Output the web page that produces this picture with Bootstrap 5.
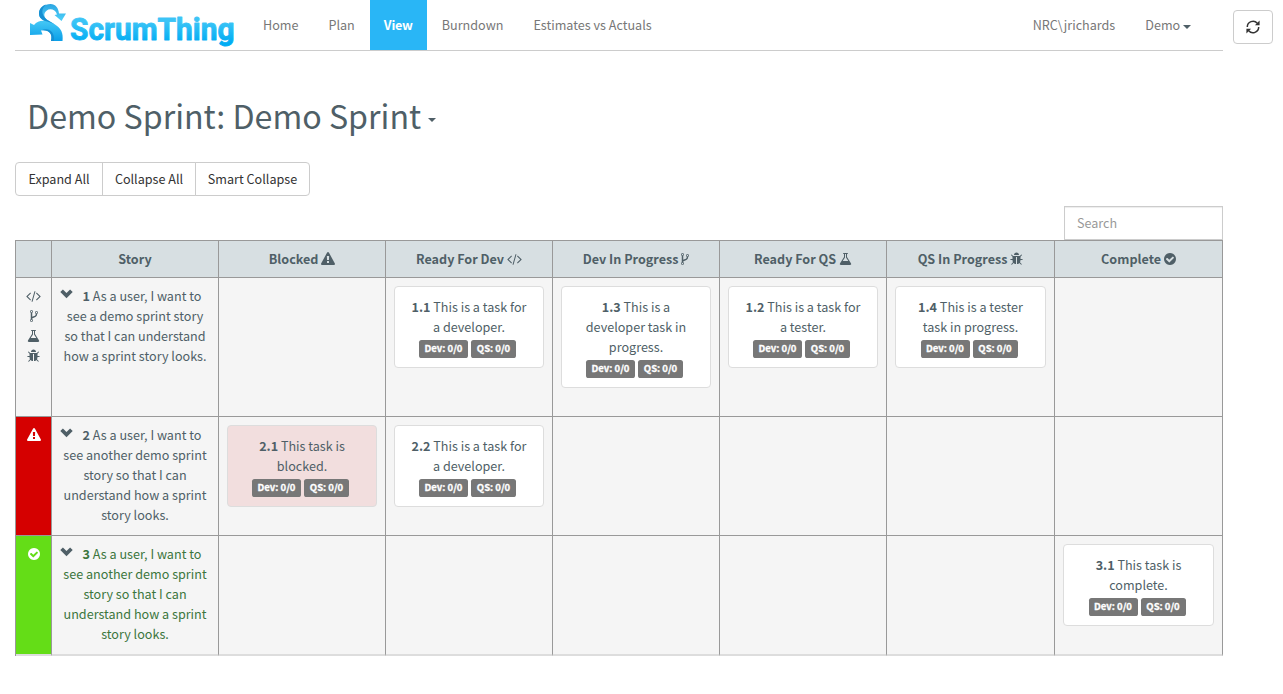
<!DOCTYPE html>
<html lang="en">
<head>
<meta charset="utf-8">
<title>ScrumThing</title>
<meta name="viewport" content="width=device-width, initial-scale=1">
<link href="https://cdn.jsdelivr.net/npm/bootstrap@5.3.0/dist/css/bootstrap.min.css" rel="stylesheet">
<style>
  body { font-family: "Noto Sans CJK SC", "Source Sans Pro", sans-serif; font-size: 12.6px; line-height: 20px; color: #4f5f67; background: #fff; overflow-x: hidden; }
  .page-main { width: 1208px; margin-left: 15px; }
  .topbar { height: 51px; border-bottom: 1px solid #ccc; padding: 0; }
  .topbar .navbar-nav .nav-link { padding: 15px; height: 50px; color: #777; line-height: 20px; white-space: nowrap; }
  .topbar .navbar-nav .nav-link.active { background: #29b6f6; color: #fff; font-weight: 700; width: 57px; padding: 15px 0; text-align: center; letter-spacing: -.2px; }
  .brand-logo { width: 218px; height: 50px; margin-right: 15px; }
  .brand-logo svg { overflow: visible; }
  .drop-caret { display: inline-block; border: 4px solid transparent; border-top-color: currentColor; border-bottom: 0; vertical-align: middle; color: #4f5f67; }
  .refresh-btn { width: 40px; height: 34px; margin: 10px 10px 0 0; padding: 0; }
  .btn-plain { --bs-btn-color: #333; --bs-btn-border-color: #ccc; --bs-btn-bg: #fff; --bs-btn-hover-bg: #e6e6e6; --bs-btn-hover-border-color: #adadad; --bs-btn-border-radius: 4px; --bs-btn-font-size: 12.6px; --bs-btn-line-height: 20px; --bs-btn-padding-y: 6px; --bs-btn-padding-x: 0; }
  .w-expand { width: 88px; } .w-collapse { width: 94px; } .w-smart { width: 115px; }
  .sprint-title { font-size: 32.2px; font-weight: 400; line-height: 40px; margin: 44px 0 27px 12px; white-space: nowrap; }
  .sprint-title .drop-caret { margin-left: 7px; }
  .filter-row { margin-top: 10px; }
  .search-box { width: 159px; height: 34px; border: 1px solid #ccc; border-radius: 0; font-size: 12.6px; line-height: 20px; padding: 5px 12px 7px; box-shadow: inset 0 1px 1px rgba(0,0,0,.075); }
  .search-box::placeholder { color: #999; }
  .board { table-layout: fixed; width: 1208px; border-collapse: separate; border-spacing: 0; border: solid #999; border-width: 1px 0 0 1px; text-align: center; }
  .board th, .board td { border: solid #999; border-width: 0 1px 1px 0; padding: 8px; vertical-align: top; background: #f5f5f5; }
  .board th { background: #d7dfe2; height: 37px; white-space: nowrap; }
  .board tr:last-child td { border-bottom: 2px solid #ddd; }
  .c-state { width: 36px; } .c-col { width: 167px; } .c-wide { width: 168px; }
  .board td.state { padding: 8px 0; }
  .board td.state-blocked { background: #d50000; color: #fff; }
  .board td.state-done { background: #64dd17; color: #fff; }
  .board td.done-text { color: #3c763d; }
  .toggler { float: left; width: 14px; height: 14px; margin-top: 3px; color: #4f5f67; line-height: 0; text-align: left; }
  .task { background: #fff; border: 1px solid #ddd; border-radius: 4px; padding: 10px 15px; margin-bottom: 20px; }
  .task-blocked { background: #f2dede; }
  .hours { display: flex; justify-content: center; height: 20px; padding-top: 3px; }
  .hours span { height: 18px; margin-right: 3px; border-radius: 2.6px; background: #777; color: #fff; font-size: 9.5px; font-weight: 700; line-height: 17px; width: 49px; flex: none; -webkit-text-stroke: .3px #fff; }
  .hours span + span { width: 45px; }
  .ico { height: 14px; vertical-align: -2px; fill: currentColor; }
</style>
</head>
<body>
<svg width="0" height="0" class="position-absolute" aria-hidden="true">
  <symbol id="code" viewBox="0 0 1920 1792"><path d="M617 1399l-50 50q-10 10-23 10t-23-10l-466-466q-10-10-10-23t10-23l466-466q10-10 23-10t23 10l50 50q10 10 10 23t-10 23l-393 393 393 393q10 10 10 23t-10 23zm591-1067l-373 1291q-4 13-15.5 19.5t-23.5 2.5l-62-17q-13-4-19.5-15.5t-2.5-24.5l373-1291q4-13 15.5-19.5t23.5-2.5l62 17q13 4 19.5 15.5t2.5 24.5zm657 651l-466 466q-10 10-23 10t-23-10l-50-50q-10-10-10-23t10-23l393-393-393-393q-10-10-10-23t10-23l50-50q10-10 23-10t23 10l466 466q10 10 10 23t-10 23z"/></symbol>
  <symbol id="fork" viewBox="384 0 1024 1792"><path d="M672 1472q0-40-28-68t-68-28-68 28-28 68 28 68 68 28 68-28 28-68zm0-1152q0-40-28-68t-68-28-68 28-28 68 28 68 68 28 68-28 28-68zm640 128q0-40-28-68t-68-28-68 28-28 68 28 68 68 28 68-28 28-68zm96 0q0 52-26 96.5t-70 69.5q-2 287-226 414-67 38-203 81-128 40-169.500 71t-41.500 100v26q44 25 70 69.500t26 96.500q0 80-56 136t-136 56-136-56-56-136q0-52 26-96.500t70-69.500v-820q-44-25-70-69.500t-26-96.500q0-80 56-136t136-56 136 56 56 136q0 52-26 96.500t-70 69.500v497q54-26 154-57 55-17 87.500-29.500t70.500-31 59-39.500 40.500-51 28-69.500 8.500-91.500q-44-25-70-69.500t-26-96.500q0-80 56-136t136-56 136 56 56 136z"/></symbol>
  <symbol id="flask" viewBox="64 0 1664 1792"><path d="M1591 1448q56 89 21.500 152.500t-140.500 63.500h-1152q-106 0-140.500-63.500t21.500-152.500l503-793v-399h-64q-26 0-45-19t-19-45 19-45 45-19h512q26 0 45 19t19 45-19 45-45 19h-64v399zm-779-725l-272 429h712l-272-429-20-31v-436h-128v436z"/></symbol>
  <symbol id="bug" viewBox="64 0 1664 1792"><path d="M1696 960q0 26-19 45t-45 19h-224q0 171-67 290l208 209q19 19 19 45t-19 45q-18 19-45 19t-45-19l-198-197q-5 5-15 13t-42 28.500-65 36.500-82 29-97 13v-896h-128v896q-51 0-101.500-13.500t-87-33-66-39-43.500-32.500l-15-14-183 207q-20 21-48 21-24 0-43-16-19-18-20.500-44.500t15.500-46.500l202-227q-58-114-58-274h-224q-26 0-45-19t-19-45 19-45 45-19h224v-294l-173-173q-19-19-19-45t19-45 45-19 45 19l173 173h844l173-173q19-19 45-19t45 19 19 45-19 45l-173 173v294h224q26 0 45 19t19 45zm-480-576h-640q0-133 93.500-226.500t226.500-93.500 226.500 93.500 93.500 226.500z"/></symbol>
  <symbol id="check" viewBox="128 0 1536 1792"><path d="M1412 734q0-28-18-46l-91-90q-19-19-45-19t-45 19l-408 407-226-226q-19-19-45-19t-45 19l-91 90q-18 18-18 46 0 27 18 45l362 362q19 19 45 19 27 0 46-19l543-543q18-18 18-45zm252 162q0 209-103 385.500t-279.500 279.500-385.500 103-385.500-103-279.500-279.500-103-385.500 103-385.500 279.500-279.500 385.500-103 385.500 103 279.500 279.500 103 385.500z"/></symbol>
  <symbol id="warn" viewBox="0 0 1792 1792"><path d="M1024 1375v-190q0-14-9.500-23.500t-22.500-9.500h-192q-13 0-22.500 9.500t-9.500 23.500v190q0 14 9.500 23.500t22.500 9.500h192q13 0 22.500-9.500t9.500-23.500zm-2-374l18-459q0-12-10-19-13-11-24-11h-220q-11 0-24 11-10 7-10 21l17 457q0 10 10 16.500t24 6.500h185q14 0 23.500-6.500t10.500-16.500zm-14-934l768 1408q35 63-2 126-17 29-46.500 46t-63.500 17h-1536q-34 0-63.500-17t-46.500-46q-37-63-2-126l768-1408q17-31 47-49t65-18 65 18 47 49z"/></symbol>
  <symbol id="chev" viewBox="0 0 13 10"><path d="M.3 3 2.900.4 6.500 4 10.100.4 12.700 3 6.500 9.200z"/></symbol>
</svg>

<div class="d-flex align-items-start justify-content-between">
  <nav class="navbar navbar-expand topbar page-main flex-nowrap align-items-start">
    <a class="brand-logo" href="#" aria-label="ScrumThing">
      <svg width="220" height="50" viewBox="15 0 220 50">
        <defs>
          <linearGradient id="word" x1="0" y1="0" x2="0" y2="1"><stop offset=".3" stop-color="#3cc4f6"/><stop offset=".85" stop-color="#00acf3"/></linearGradient>
          <linearGradient id="swoosh" x1="0" y1="0" x2="0" y2="1"><stop offset="0" stop-color="#2ba5e2"/><stop offset=".4" stop-color="#4bccf7"/><stop offset="1" stop-color="#0a9fe8"/></linearGradient>
        </defs>
        <path fill="url(#swoosh)" d="M59 13.500H66L61.500 21 54.500 15 57 14.400C55.500 9.500 50 8 46.500 10.700 43.500 13 43.500 17 47 19.800L55 24.500C61 28 63.500 33 62.500 41H51C53 34 49 29.500 41 30.500L42.500 34.500 30 35V23L34 25C37 21.500 41 20.300 45 21 40.500 19 39 16.500 39 13.500 39 8 44.500 4 50.500 4 55.500 4 58.500 8 59 13.500Z"/>
        <path fill="#168fd2" d="M45 21C40.500 19 39 16.500 39 13.500 39 9 42 6 46 4.600 41 9 41 14.500 47 19.800L55 24.500C51 22.500 48 21.500 45 21ZM51 41C53 34 49 29.500 41 30.500 48 27 55 31 54 41Z"/>
        <text x="70" y="40.300" font-family="Roboto, sans-serif" font-weight="700" font-size="32" textLength="164.500" lengthAdjust="spacingAndGlyphs" fill="url(#word)" stroke="url(#word)" stroke-width=".9" stroke-linejoin="round">ScrumThing</text>
      </svg>
    </a>
    <div class="navbar-nav me-auto">
      <a class="nav-link" href="#">Home</a>
      <a class="nav-link" href="#">Plan</a>
      <a class="nav-link active" href="#">View</a>
      <a class="nav-link" href="#">Burndown</a>
      <a class="nav-link" href="#">Estimates vs Actuals</a>
    </div>
    <div class="navbar-nav me-3">
      <a class="nav-link" href="#">NRC\jrichards</a>
      <a class="nav-link pe-3" href="#">Demo <span class="drop-caret"></span></a>
    </div>
  </nav>
  <button class="btn btn-plain refresh-btn d-flex align-items-center justify-content-center" aria-label="Refresh">
    <svg width="14" height="14" viewBox="0 0 14 14" fill="none" stroke="#333" stroke-width="1.500"><path d="M1.300 7A5.700 5.700 0 0 1 11.300 3.200M12.700 7A5.700 5.700 0 0 1 2.700 10.800"/><path fill="#333" stroke="none" d="M13.600.6V5.300H8.900zM.4 13.400V8.700H5.100z"/></svg>
  </button>
</div>

<main class="page-main">
  <h1 class="sprint-title">Demo Sprint: Demo Sprint<span class="drop-caret"></span></h1>
  <div class="btn-group d-flex" role="group">
    <button class="btn btn-plain w-expand flex-grow-0 flex-shrink-0">Expand All</button>
    <button class="btn btn-plain w-collapse flex-grow-0 flex-shrink-0">Collapse All</button>
    <button class="btn btn-plain w-smart flex-grow-0 flex-shrink-0">Smart Collapse</button>
  </div>
  <div class="d-flex justify-content-end filter-row">
    <input class="form-control search-box" type="text" placeholder="Search">
  </div>
  <table class="board">
    <colgroup><col class="c-state"><col class="c-col"><col class="c-col"><col class="c-col"><col class="c-col"><col class="c-col"><col class="c-wide"><col class="c-wide"></colgroup>
    <thead>
      <tr>
        <th></th><th>Story</th>
        <th>Blocked <svg class="ico" width="14"><use href="#warn"/></svg></th>
        <th>Ready For Dev <svg class="ico" width="15"><use href="#code"/></svg></th>
        <th>Dev In Progress <svg class="ico" width="8"><use href="#fork"/></svg></th>
        <th>Ready For QS <svg class="ico" width="13"><use href="#flask"/></svg></th>
        <th>QS In Progress <svg class="ico" width="13"><use href="#bug"/></svg></th>
        <th>Complete <svg class="ico" width="12"><use href="#check"/></svg></th>
      </tr>
    </thead>
    <tbody>
      <tr>
        <td class="state">
          <div><svg class="ico" width="15"><use href="#code"/></svg></div>
          <div><svg class="ico" width="8"><use href="#fork"/></svg></div>
          <div><svg class="ico" width="13"><use href="#flask"/></svg></div>
          <div><svg class="ico" width="13"><use href="#bug"/></svg></div>
        </td>
        <td><span class="toggler"><svg width="13" height="10" fill="currentColor"><use href="#chev"/></svg></span><b>1</b> As a user, I want to see a demo sprint story so that I can understand how a sprint story looks.</td>
        <td></td>
        <td><div class="task"><b>1.1</b> This is a task for a developer.<div class="hours"><span>Dev: 0/0</span><span>QS: 0/0</span></div></div></td>
        <td><div class="task"><b>1.3</b> This is a developer task in progress.<div class="hours"><span>Dev: 0/0</span><span>QS: 0/0</span></div></div></td>
        <td><div class="task"><b>1.2</b> This is a task for a tester.<div class="hours"><span>Dev: 0/0</span><span>QS: 0/0</span></div></div></td>
        <td><div class="task"><b>1.4</b> This is a tester task in progress.<div class="hours"><span>Dev: 0/0</span><span>QS: 0/0</span></div></div></td>
        <td></td>
      </tr>
      <tr>
        <td class="state state-blocked"><svg class="ico" width="14"><use href="#warn"/></svg></td>
        <td><span class="toggler"><svg width="13" height="10" fill="currentColor"><use href="#chev"/></svg></span><b>2</b> As a user, I want to see another demo sprint story so that I can understand how a sprint story looks.</td>
        <td><div class="task task-blocked"><b>2.1</b> This task is blocked.<div class="hours"><span>Dev: 0/0</span><span>QS: 0/0</span></div></div></td>
        <td><div class="task"><b>2.2</b> This is a task for a developer.<div class="hours"><span>Dev: 0/0</span><span>QS: 0/0</span></div></div></td>
        <td></td><td></td><td></td><td></td>
      </tr>
      <tr>
        <td class="state state-done"><svg class="ico" width="12"><use href="#check"/></svg></td>
        <td class="done-text"><span class="toggler"><svg width="13" height="10" fill="currentColor"><use href="#chev"/></svg></span><b>3</b> As a user, I want to see another demo sprint story so that I can understand how a sprint story looks.</td>
        <td></td><td></td><td></td><td></td><td></td>
        <td><div class="task"><b>3.1</b> This task is complete.<div class="hours"><span>Dev: 0/0</span><span>QS: 0/0</span></div></div></td>
      </tr>
    </tbody>
  </table>
</main>
<script src="https://cdn.jsdelivr.net/npm/bootstrap@5.3.0/dist/js/bootstrap.bundle.min.js"></script>
</body>
</html>
